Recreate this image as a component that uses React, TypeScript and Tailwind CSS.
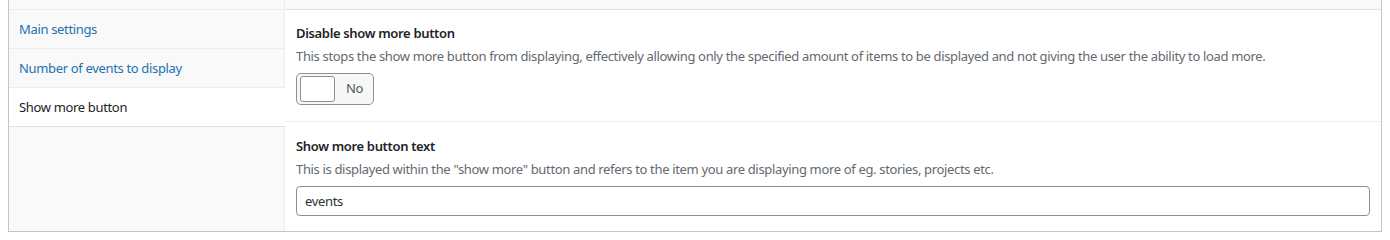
export default function App() {
  const tabs = [
    { label: "Main settings", active: false },
    { label: "Number of events to display", active: false },
    { label: "Show more button", active: true },
  ];

  return (
    <div className="min-h-[236px] bg-white pl-2 pr-2 pb-[3px] font-['Noto_Sans',sans-serif] text-[13px] tracking-[-0.34px]">
      <div className="flex border-x border-b border-[#c3c4c7] bg-[#f9f9f9]">
        {/* tabs */}
        <div className="w-[276px] shrink-0 border-r border-[#ededed]">
          <div className="h-[10px] border-b border-[#ededed]" />
          {tabs.map((t) => (
            <div
              key={t.label}
              className={
                t.active
                  ? "relative -mr-px flex h-[39px] items-center border-b border-[#e2e2e2] bg-white pt-px pl-[10px] text-[#1d2327]"
                  : "flex h-[39px] items-center border-b border-[#ededed] pt-px pl-[10px] text-[#2271b1]"
              }
            >
              {t.label}
            </div>
          ))}
        </div>

        {/* content */}
        <div className="flex-1">
          <div className="h-[10px] border-b border-[#e2e2e2]" />
          <div className="bg-white">
            <div className="border-b border-[#f0f0f1] px-[11px] pt-[13px] pb-[16px]">
              <div className="font-semibold leading-[20px] text-[#1d2327]">Disable show more button</div>
              <p className="mt-[3px] leading-[20px] text-[#646970]">
                This stops the show more button from displaying, effectively allowing only the specified amount of items to be displayed and not giving the user the ability to load more.
              </p>
              <button className="mt-[7px] flex h-[32px] w-[78px] items-center rounded-[5px] border border-[#8c8f94] bg-[#f6f7f7] pl-[3px]">
                <span className="h-[26px] w-[35px] rounded-[3px] border border-[#8c8f94] bg-white" />
                <span className="ml-[11px] text-[#50575e]">No</span>
              </button>
            </div>
            <div className="px-[11px] pt-[14px] pb-[15px]">
              <div className="font-semibold leading-[20px] text-[#1d2327]">Show more button text</div>
              <p className="mt-[3px] leading-[20px] text-[#646970]">
                This is displayed within the "show more" button and refers to the item you are displaying more of eg. stories, projects etc.
              </p>
              <input
                defaultValue="events"
                className="mt-[7px] block h-[30px] w-full rounded-[4px] border border-[#8c8f94] bg-white px-2 text-[#2c3338] outline-none"
              />
            </div>
          </div>
        </div>
      </div>
    </div>
  );
}
